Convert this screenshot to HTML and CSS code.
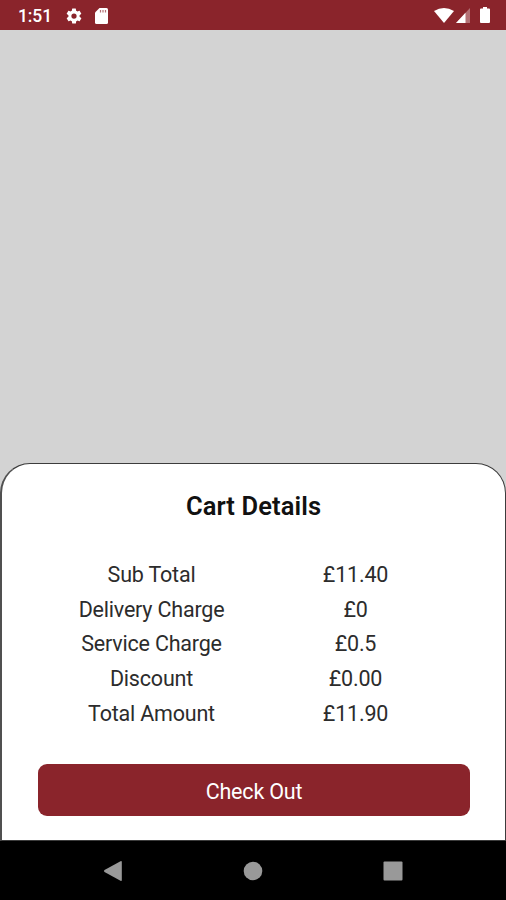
FILE: index.html
```html
<!DOCTYPE html>
<html lang="en">
<head>
<meta charset="utf-8">
<title>Cart Details</title>
<link rel="stylesheet" href="styles.css">
</head>
<body>
<div class="screen">
  <header class="status">
    <span class="clock">1:51</span>
    <svg class="gear" width="18" height="18" viewBox="0 0 24 24"><path fill="#fff" d="M19.4 13c.04-.3.06-.7.06-1s-.02-.7-.06-1l2.1-1.65c.2-.15.25-.42.12-.64l-2-3.46c-.12-.22-.38-.3-.6-.22l-2.5 1c-.52-.4-1.08-.73-1.7-.98l-.37-2.65A.5.5 0 0 0 14 2h-4a.5.5 0 0 0-.5.4l-.37 2.65c-.62.25-1.18.6-1.7.98l-2.5-1c-.22-.08-.48 0-.6.22l-2 3.46c-.13.22-.08.49.12.64L4.6 11c-.04.3-.07.7-.07 1s.03.7.07 1l-2.1 1.65c-.2.15-.25.42-.12.64l2 3.46c.12.22.38.3.6.22l2.5-1c.52.4 1.08.73 1.7.98l.37 2.65c.04.24.25.4.5.4h4c.25 0 .46-.16.5-.4l.37-2.65c.62-.25 1.18-.58 1.7-.98l2.5 1c.22.08.48 0 .6-.22l2-3.46c.13-.22.08-.49-.12-.64zM12 15.5a3.5 3.5 0 1 1 0-7 3.5 3.5 0 0 1 0 7z"/></svg>
    <svg class="card" width="13" height="16" viewBox="0 0 13 16"><path fill="#fff" d="M4.5 0H11.5Q13 0 13 1.500V14.500Q13 16 11.500 16H1.500Q0 16 0 14.500V4.500z"/><path stroke="#8a242b" stroke-opacity=".65" stroke-width="1.200" d="M5.500 2v2.500M8 2v2.500M10.500 2v2.500"/></svg>
    <span class="spacer"></span>
    <svg class="wifi" width="20" height="15" viewBox="0 0 20 15"><path fill="#fff" d="M0 3Q10-3 20 3L10 15z"/></svg>
    <svg class="signal" width="14" height="15" viewBox="0 0 14 15"><path fill="#fff" fill-opacity=".35" d="M14 0V15H0z"/><path fill="#fff" d="M9.500 4.800V15H0z"/></svg>
    <svg class="battery" width="10" height="16" viewBox="0 0 10 16"><path fill="#fff" d="M3 0H7V1.600H9Q10 1.600 10 2.600V15Q10 16 9 16H1Q0 16 0 15V2.600Q0 1.600 1 1.600H3z"/></svg>
  </header>
  <main class="backdrop">
    <section class="sheet">
      <h1>Cart Details</h1>
      <dl class="totals">
        <dt>Sub Total</dt><dd>£11.40</dd>
        <dt>Delivery Charge</dt><dd>£0</dd>
        <dt>Service Charge</dt><dd>£0.5</dd>
        <dt>Discount</dt><dd>£0.00</dd>
        <dt>Total Amount</dt><dd>£11.90</dd>
      </dl>
      <button class="checkout">Check Out</button>
    </section>
  </main>
  <nav class="navbar">
    <svg width="20" height="22" viewBox="0 0 20 22"><path fill="#999" d="M17.500 1.200Q18.800.500 18.800 2V20Q18.800 21.500 17.500 20.800L1.500 12Q.300 11 1.500 10z"/></svg>
    <svg width="20" height="20" viewBox="0 0 20 20"><circle cx="10" cy="10" r="9.300" fill="#999"/></svg>
    <svg width="20" height="20" viewBox="0 0 20 20"><rect x=".5" y=".5" width="19" height="19" rx="1" fill="#999"/></svg>
  </nav>
</div>
</body>
</html>
```
FILE: styles.css
```css
* { box-sizing: border-box; margin: 0; padding: 0; }
body { font-family: Roboto, "Liberation Sans", sans-serif; background: #000; }
svg { display: block; flex: none; }
.screen { width: 506px; height: 900px; display: flex; flex-direction: column; overflow: hidden; }
.status { height: 30px; background: #8a242b; color: #fff; display: flex; align-items: center; padding: 1px 16px 0 18px; }
.clock { font-size: 17.5px; font-weight: 500; line-height: 30px; width: 34px; letter-spacing: -.1px; }
.gear { margin-left: 13px; }
.card { margin-left: 12px; }
.spacer { flex: 1; }
.wifi { margin-bottom: 1px; }
.signal { margin-left: 2px; }
.battery { margin-left: 10px; margin-bottom: 1px; }
.backdrop { flex: 1; background: #d3d3d3; display: flex; align-items: flex-end; }
.sheet { width: 506px; height: 378px; background: #fff; border: 1px solid #3c3c3c; border-left: 2px solid #505050; border-radius: 30px 30px 0 0; padding: 27px 36px 0 36px; }
h1 { font-size: 25.5px; font-weight: 600; line-height: 30px; text-align: center; color: #111; letter-spacing: .1px; }
.totals { margin-top: 37px; display: grid; grid-template-columns: 227px 181px; grid-auto-rows: 34.7px; font-size: 21.5px; line-height: 34.7px; text-align: center; color: #2c2c2c; letter-spacing: -.2px; }
.checkout { display: block; width: 432px; height: 52.5px; margin-top: 32.5px; padding-top: 2px; border: 0; border-radius: 9px; background: #8a242b; color: #fff; font: 400 21.5px/51px Roboto, "Liberation Sans", sans-serif; letter-spacing: -.2px; }
.navbar { height: 59px; background: #000; display: flex; align-items: center; justify-content: space-between; padding: 0 103px; }
```
